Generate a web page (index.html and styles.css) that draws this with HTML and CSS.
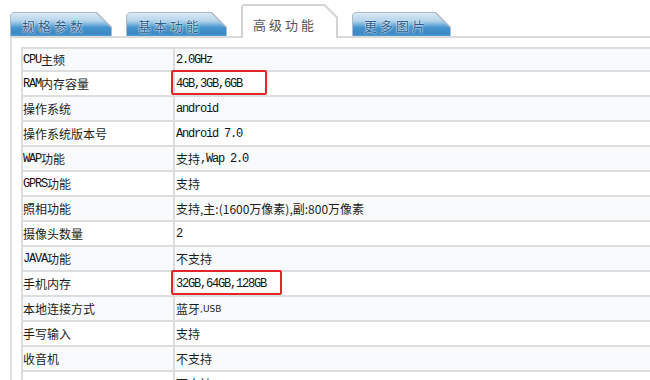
FILE: index.html
```html
<!DOCTYPE html>
<html lang="zh">
<head>
<meta charset="utf-8">
<link rel="stylesheet" href="styles.css">
</head>
<body>
<div class="tabs">
  <div class="tab t1"><span class="tab-in">规格参数</span></div>
  <div class="tab t2"><span class="tab-in">基本功能</span></div>
  <div class="tab active"><span class="tab-in">高级功能</span></div>
  <div class="tab t4"><span class="tab-in">更多图片</span></div>
</div>
<div class="panel">
  <div class="table">
    <div class="row"><div class="k"><span class="en">CPU</span>主频</div><div class="v"><span class="en">2.0GHz</span></div></div>
    <div class="row"><div class="k"><span class="en">RAM</span>内存容量</div><div class="v"><span class="mark mark-a"><span class="en">4GB,3GB,6GB</span></span></div></div>
    <div class="row"><div class="k">操作系统</div><div class="v"><span class="en">android</span></div></div>
    <div class="row"><div class="k">操作系统版本号</div><div class="v"><span class="en">Android 7.0</span></div></div>
    <div class="row"><div class="k"><span class="en">WAP</span>功能</div><div class="v">支持<span class="en">,Wap 2.0</span></div></div>
    <div class="row"><div class="k"><span class="en">GPRS</span>功能</div><div class="v">支持</div></div>
    <div class="row"><div class="k">照相功能</div><div class="v">支持,主:(1600万像素),副:800万像素</div></div>
    <div class="row"><div class="k">摄像头数量</div><div class="v"><span class="en">2</span></div></div>
    <div class="row"><div class="k"><span class="en">JAVA</span>功能</div><div class="v">不支持</div></div>
    <div class="row"><div class="k">手机内存</div><div class="v"><span class="mark mark-b"><span class="en">32GB,64GB,128GB</span></span></div></div>
    <div class="row"><div class="k">本地连接方式</div><div class="v">蓝牙<span class="sm">,USB</span></div></div>
    <div class="row"><div class="k">手写输入</div><div class="v">支持</div></div>
    <div class="row"><div class="k">收音机</div><div class="v">不支持</div></div>
    <div class="row"><div class="k"></div><div class="v">不支持</div></div>
  </div>
</div>
</body>
</html>
```
FILE: styles.css
```css
html, body {
  margin: 0;
  padding: 0;
  background: #fff;
}
body {
  width: 650px;
  height: 380px;
  overflow: hidden;
  font-family: "Noto Sans CJK SC", "Liberation Sans", sans-serif;
  font-size: 12px;
  color: #1c1c1c;
}
.tabs {
  display: flex;
  align-items: flex-end;
  height: 36px;
  padding-left: 10px;
  gap: 14px;
  position: relative;
  z-index: 2;
}
.tab {
  height: 24px;
  width: 102px;
  box-sizing: border-box;
  padding: 1px 1px 0 1px;
  background: #aebbc6;
  clip-path: polygon(0 3px, 3px 0, calc(100% - 15px) 0, 100% 15px, 100% 100%, 0 100%);
  display: flex;
}
.tab-in {
  flex: 1;
  display: flex;
  align-items: center;
  padding-left: 11px;
  padding-top: 2px;
  font-size: 13px;
  letter-spacing: 3px;
  color: #2a5c8c;
  text-shadow: 0 0 2px #fff, 0 0 1px #fff;
  background: linear-gradient(#dbeaf4 0%, #b3d3ea 35%, #79b3dc 50%, #4896cf 62%, #3a88c4 88%, #4f9bd1 100%);
  clip-path: polygon(0 2px, 2px 0, calc(100% - 15px) 0, 100% 15px, 100% 100%, 0 100%);
}
.t2 { width: 101px; }
.t4 { width: 99px; }
.tab.active {
  height: 34px;
  width: 97px;
  padding: 2px 2px 0 2px;
  background: #d3d3d3;
  clip-path: polygon(0 2px, 2px 0, calc(100% - 13px) 0, 100% 13px, 100% 100%, 0 100%);
  margin-bottom: -2px;
}
.tab.active .tab-in {
  background: #fff;
  color: #555;
  text-shadow: none;
  padding-left: 10px;
  padding-top: 4px;
  padding-bottom: 0;
  clip-path: polygon(0 0, calc(100% - 12px) 0, 100% 12px, 100% 100%, 0 100%);
}
.panel {
  border-top: 2px solid #dadada;
  border-left: 2px solid #e2e2e2;
  margin-left: 10px;
  padding: 9px 0 0 9px;
  height: 400px;
}
.table {
  width: 700px;
  border-top: 2px solid #dcdcdc;
  border-left: 2px solid #dcdcdc;
}
.row {
  display: grid;
  grid-template-columns: 152px 1fr;
  height: 25px;
  box-sizing: border-box;
  border-bottom: 2px solid #dddddd;
}
.row:nth-child(odd) { background: #f8fafc; }
.row:first-child { height: 23px; }
.k, .v {
  display: flex;
  align-items: center;
  white-space: nowrap;
}
.k {
  padding-left: 0;
  border-right: 2px solid #dcdcdc;
}
.v {
  padding-left: 1px;
  position: relative;
}
.en {
  font-family: "Liberation Mono", monospace;
  font-size: 12px;
  letter-spacing: -1.2px;
  color: #111;
}
.sm {
  font-family: "DejaVu Sans", sans-serif;
  font-size: 9px;
}
.mark {
  position: relative;
  display: inline-flex;
}
.mark::after {
  content: "";
  position: absolute;
  left: -5px;
  top: -7px;
  height: 25px;
  box-sizing: border-box;
  border: 2px solid #e3262a;
  border-radius: 2px;
}
.mark-a::after { width: 96px; }
.mark-b::after { width: 111px; }
```
